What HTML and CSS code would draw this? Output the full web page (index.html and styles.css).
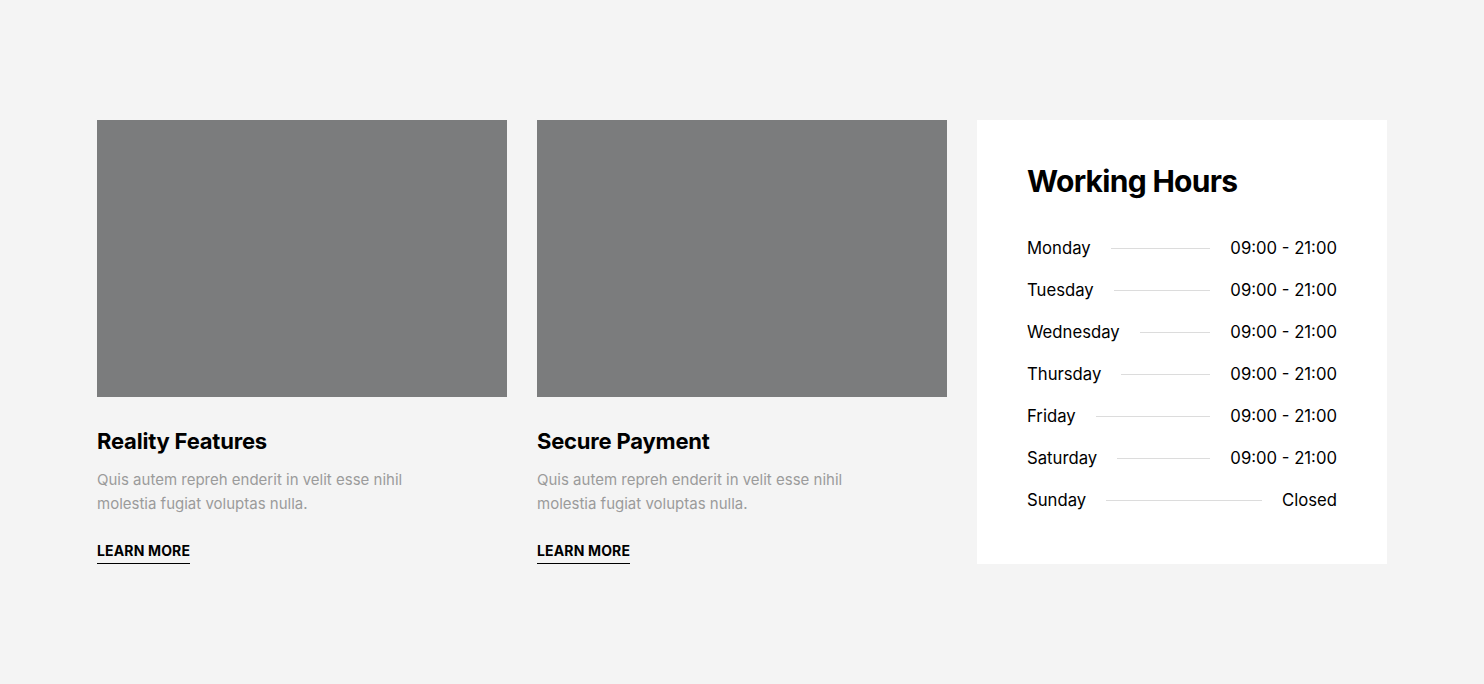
FILE: index.html
```html
<!DOCTYPE html>
<html>
<head>
<meta charset="utf-8">
<link rel="stylesheet" href="styles.css">
</head>
<body>
<section class="section">
  <div class="grid">
    <article class="feature">
      <div class="thumb"></div>
      <h3 class="feature-title">Reality Features</h3>
      <p class="feature-text">Quis autem repreh enderit in velit esse nihil molestia fugiat voluptas nulla.</p>
      <a class="more" href="#">LEARN MORE</a>
    </article>
    <article class="feature">
      <div class="thumb"></div>
      <h3 class="feature-title">Secure Payment</h3>
      <p class="feature-text">Quis autem repreh enderit in velit esse nihil molestia fugiat voluptas nulla.</p>
      <a class="more" href="#">LEARN MORE</a>
    </article>
    <aside class="hours">
      <h2 class="hours-title">Working Hours</h2>
      <ul class="hours-list">
        <li class="row"><span class="day">Monday</span><span class="line"></span><span class="time">09:00 - 21:00</span></li>
        <li class="row"><span class="day">Tuesday</span><span class="line"></span><span class="time">09:00 - 21:00</span></li>
        <li class="row"><span class="day">Wednesday</span><span class="line"></span><span class="time">09:00 - 21:00</span></li>
        <li class="row"><span class="day">Thursday</span><span class="line"></span><span class="time">09:00 - 21:00</span></li>
        <li class="row"><span class="day">Friday</span><span class="line"></span><span class="time">09:00 - 21:00</span></li>
        <li class="row"><span class="day">Saturday</span><span class="line"></span><span class="time">09:00 - 21:00</span></li>
        <li class="row"><span class="day">Sunday</span><span class="line"></span><span class="time">Closed</span></li>
      </ul>
    </aside>
  </div>
</section>
</body>
</html>
```

FILE: styles.css
```css
html, body {
  margin: 0;
  padding: 0;
}
body {
  background: #f4f4f4;
  font-family: Inter, "Noto Sans", sans-serif;
  color: #000;
}
.section {
  padding: 120px 0;
}
.grid {
  width: 1290px;
  margin: 0 auto;
  display: grid;
  grid-template-columns: repeat(3, 410px);
  gap: 30px;
  align-items: start;
}
.thumb {
  height: 277px;
  background: #7b7c7d;
}
.feature-title {
  margin: 30px 0 0;
  font-size: 22px;
  line-height: 28px;
  font-weight: 700;
  letter-spacing: -0.2px;
}
.feature-text {
  margin: 13px 0 0;
  width: 320px;
  font-size: 15px;
  line-height: 24px;
  color: #9b9b9b;
}
.more {
  display: inline-block;
  margin-top: 26px;
  font-size: 14px;
  font-weight: 700;
  line-height: 18px;
  letter-spacing: 0.15px;
  color: #000;
  text-decoration: none;
  border-bottom: 1px solid #000;
  padding-bottom: 3px;
}
.hours {
  background: #fff;
  padding: 42px 50px 43px;
}
.hours-title {
  margin: 0;
  font-size: 30px;
  line-height: 38px;
  font-weight: 700;
  letter-spacing: -0.7px;
}
.hours-list {
  list-style: none;
  margin: 27px 0 0;
  padding: 0;
}
.row {
  display: flex;
  align-items: center;
  height: 42px;
  font-size: 16.7px;
}
.line {
  flex: 1;
  height: 1px;
  background: #dcdcdc;
  margin: 0 20px;
}
```
